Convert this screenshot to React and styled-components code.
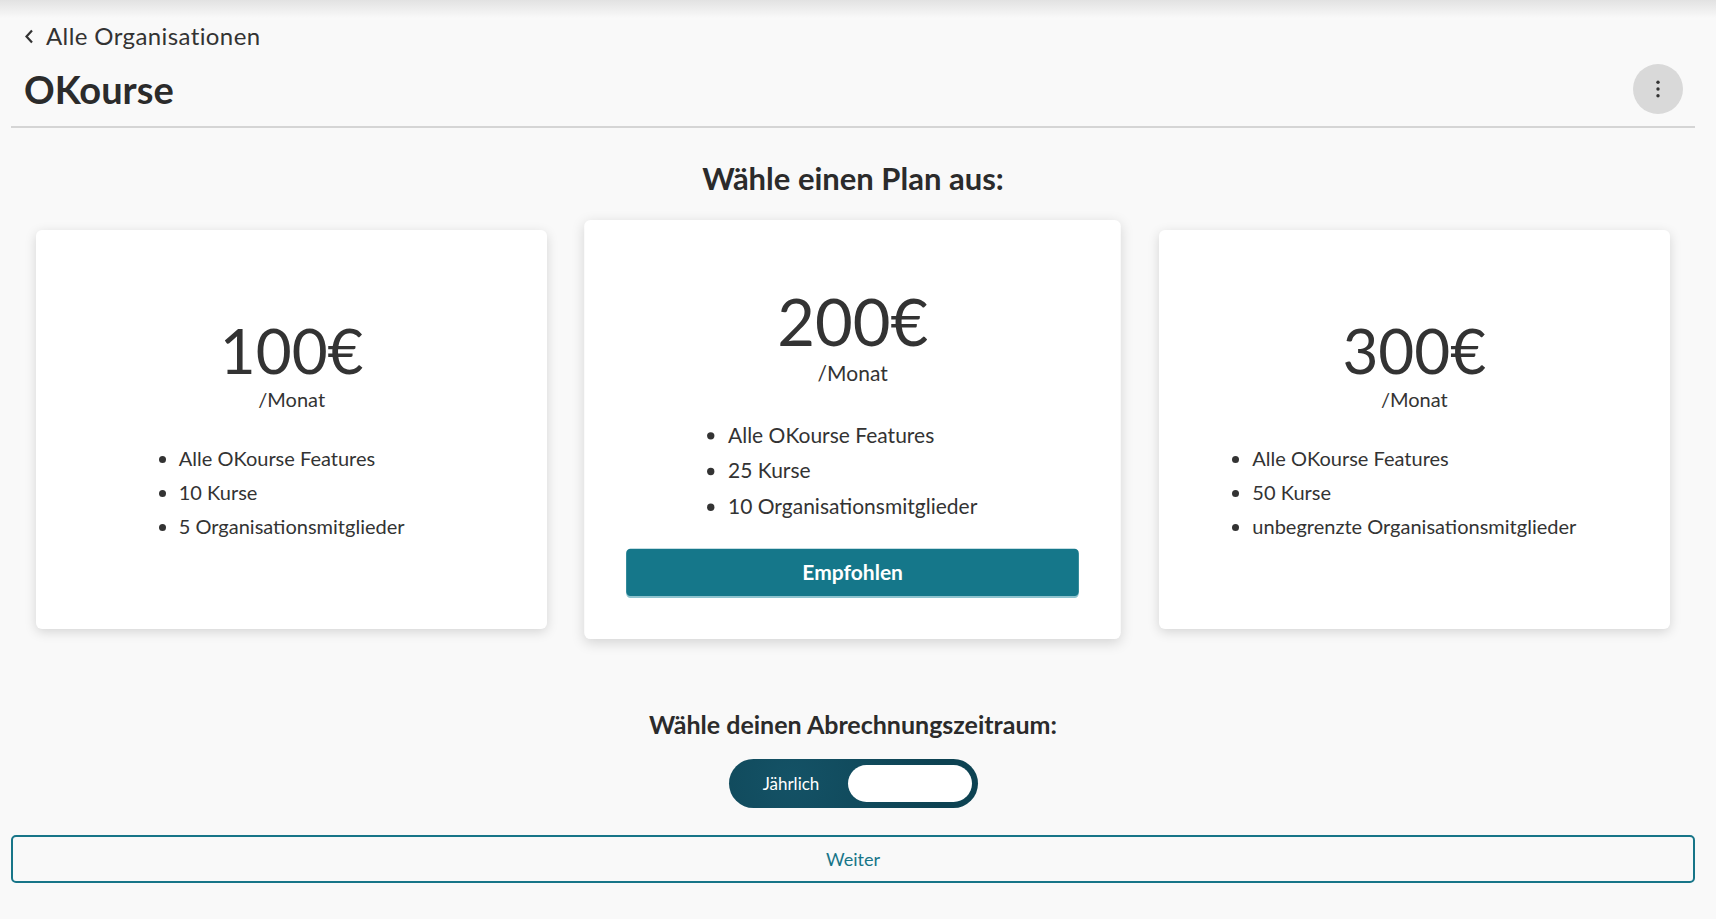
import React from "react";
import styled, { createGlobalStyle } from "styled-components";

const GlobalStyle = createGlobalStyle`
  html, body {
    margin: 0;
    padding: 0;
  }
  body {
    font-family: Lato, "Open Sans", Arial, sans-serif;
    color: #333;
    background: linear-gradient(#e2e2e2, #f9f9f9 18px) no-repeat, #f9f9f9;
    min-height: 919px;
  }
`;

const Page = styled.div`
  padding: 0 21px 0 11px;
`;

const Header = styled.header`
  padding: 23px 12px 12px 13px;
  border-bottom: 2px solid #d5d5d5;
`;

const BackLink = styled.a`
  display: flex;
  align-items: center;
  gap: 12px;
  font-size: 24px;
  letter-spacing: 0.4px;
  line-height: 26px;
  color: #333;
  cursor: pointer;
`;

const TitleRow = styled.div`
  display: flex;
  align-items: center;
  justify-content: space-between;
  height: 50px;
  margin-top: 15px;
`;

const Title = styled.h1`
  margin: 0;
  font-size: 38px;
  font-weight: 700;
  line-height: 44px;
  color: #2b2b2b;
`;

const MenuButton = styled.button`
  width: 50px;
  height: 50px;
  border: none;
  border-radius: 50%;
  background: #d9d9d9;
  display: flex;
  align-items: center;
  justify-content: center;
  padding: 0;
`;

const SectionTitle = styled.h2`
  margin: ${(p) => p.$top}px 0 0;
  text-align: center;
  font-size: ${(p) => p.$size}px;
  line-height: ${(p) => Math.round(p.$size * 1.2)}px;
  font-weight: 700;
  color: #2b2b2b;
`;

const CardRow = styled.div`
  display: flex;
  gap: 50px;
  padding: 0 25px;
  margin-top: 33px;
`;

const Card = styled.div`
  flex: 1;
  height: 399px;
  box-sizing: border-box;
  padding-top: ${(p) => (p.$featured ? 17 : 0)}px;
  background: #fff;
  border-radius: 6px;
  box-shadow: 0 3px 12px rgba(0, 0, 0, 0.15);
  display: flex;
  flex-direction: column;
  align-items: center;
  justify-content: center;
  transform: ${(p) => (p.$featured ? "scale(1.05)" : "none")};
`;

const Price = styled.div`
  font-size: 62px;
  font-weight: 400;
  line-height: 74px;
  color: #333;
`;

const Period = styled.div`
  font-size: 20px;
  line-height: 24px;
  color: #333;
`;

const Features = styled.ul`
  margin: 35px 0 9px;
  padding: 0;
  text-align: left;
`;

const Feature = styled.li`
  font-size: 20px;
  line-height: 24px;
  color: #333;
  & + & {
    margin-top: 10px;
  }
`;

const RecommendButton = styled.button`
  width: calc(100% - 80px);
  height: 45px;
  margin-top: 20px;
  border: none;
  border-radius: 4px;
  background: #15778a;
  box-shadow: 0 2px 0 #8fc4cf;
  color: #fff;
  font-family: inherit;
  font-size: 20px;
  font-weight: 700;
`;

const Toggle = styled.div`
  width: 249px;
  height: 49px;
  margin: 20px auto 0;
  padding: 6px;
  box-sizing: border-box;
  border-radius: 25px;
  background: radial-gradient(circle at 25% 40%, #145266, #0d4252 80%);
  display: flex;
  align-items: center;
`;

const ToggleLabel = styled.div`
  flex: 1;
  text-align: center;
  color: #fff;
  font-size: 17px;
`;

const ToggleKnob = styled.div`
  width: 124px;
  height: 37px;
  border-radius: 19px;
  background: #fff;
`;

const NextButton = styled.button`
  display: block;
  width: 100%;
  height: 48px;
  margin-top: 27px;
  border: 2px solid #177588;
  border-radius: 5px;
  background: transparent;
  color: #177588;
  font-family: inherit;
  font-size: 18px;
`;

const plans = [
  { price: "100€", items: ["Alle OKourse Features", "10 Kurse", "5 Organisationsmitglieder"] },
  { price: "200€", items: ["Alle OKourse Features", "25 Kurse", "10 Organisationsmitglieder"], featured: true },
  { price: "300€", items: ["Alle OKourse Features", "50 Kurse", "unbegrenzte Organisationsmitglieder"] },
];

export default function App() {
  return (
    <Page>
      <GlobalStyle />
      <Header>
        <BackLink>
          <svg width="10" height="15" viewBox="0 0 10 15">
            <polyline points="8,1.5 2.5,7.5 8,13.5" fill="none" stroke="#333" strokeWidth="2.2" />
          </svg>
          Alle Organisationen
        </BackLink>
        <TitleRow>
          <Title>OKourse</Title>
          <MenuButton aria-label="Menü">
            <svg width="6" height="18" viewBox="0 0 6 18">
              <circle cx="3" cy="2.3" r="1.7" fill="#333" />
              <circle cx="3" cy="9" r="1.7" fill="#333" />
              <circle cx="3" cy="15.7" r="1.7" fill="#333" />
            </svg>
          </MenuButton>
        </TitleRow>
      </Header>

      <SectionTitle $top={32} $size={31}>Wähle einen Plan aus:</SectionTitle>

      <CardRow>
        {plans.map((plan) => (
          <Card key={plan.price} $featured={plan.featured}>
            <Price>{plan.price}</Price>
            <Period>/Monat</Period>
            <Features>
              {plan.items.map((item) => (
                <Feature key={item}>{item}</Feature>
              ))}
            </Features>
            {plan.featured && <RecommendButton>Empfohlen</RecommendButton>}
          </Card>
        ))}
      </CardRow>

      <SectionTitle $top={80} $size={25}>Wähle deinen Abrechnungszeitraum:</SectionTitle>

      <Toggle>
        <ToggleLabel>Jährlich</ToggleLabel>
        <ToggleKnob />
      </Toggle>

      <NextButton>Weiter</NextButton>
    </Page>
  );
}
